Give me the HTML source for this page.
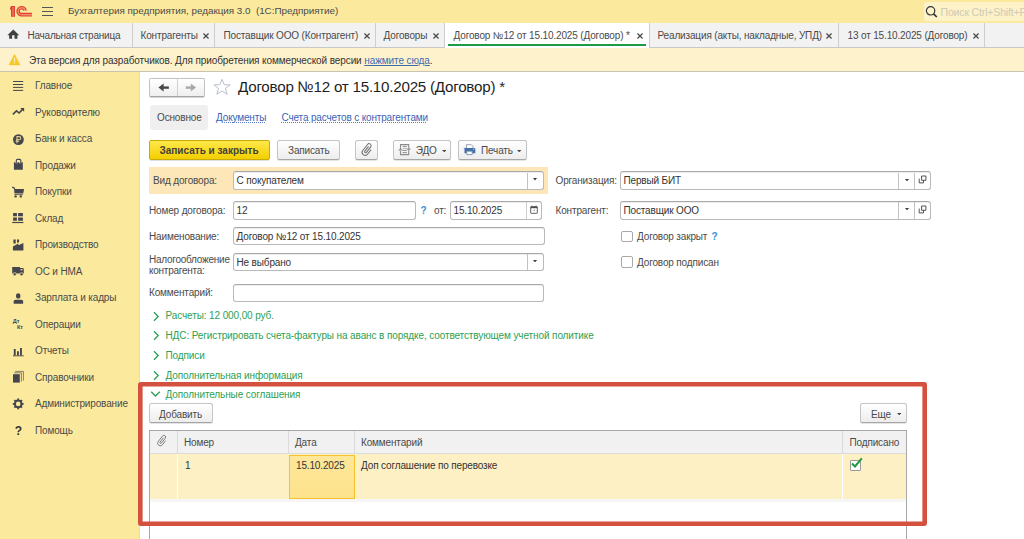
<!DOCTYPE html>
<html><head><meta charset="utf-8">
<style>
*{box-sizing:border-box;margin:0;padding:0}
html,body{width:1024px;height:539px;overflow:hidden;background:#fff;font-family:"Liberation Sans",sans-serif;font-size:10px;letter-spacing:-0.15px;color:#4d4d4d}
.a{position:absolute;white-space:nowrap;line-height:12px}
#top{position:absolute;left:0;top:0;width:1024px;height:23px;background:#fbea9e}
#tabs{position:absolute;left:0;top:23px;width:1024px;height:25px;background:#f2f2f2;border-bottom:1px solid #c8c8c8}
.sep{position:absolute;top:23px;width:1px;height:24px;background:#cdcdcd}
#warn{position:absolute;left:0;top:48px;width:1024px;height:24px;background:#fef2cc;border-bottom:1px solid #c9c4b0}
#side{position:absolute;left:0;top:72px;width:140px;height:467px;background:#fbea9e;border-right:1px solid #efdf98}
.x{position:absolute;font-size:12px;line-height:12px;color:#555}
.inp{position:absolute;background:#fff;border:1px solid #b9b9b9;border-top-color:#a9a9a9;border-radius:3px;box-shadow:inset 0 1px 0 rgba(0,0,0,.07)}
.btn{position:absolute;border:1px solid #c4c4c4;border-bottom-color:#a6a6a6;border-radius:2.5px;background:linear-gradient(#fff,#ededed);box-shadow:0 1px 0 rgba(0,0,0,.1)}
.grp{color:#2c9f55;letter-spacing:-0.11px}
.lbl{color:#4d4d4d}
.val{color:#333}
</style></head><body>

<!-- top bar -->
<div id="top"></div>
<svg class="a" style="left:6px;top:3px" width="30" height="17" viewBox="0 0 30 17">
 <path d="M5 3.1H9V13.7H5V6.8L4 6.6V5.3Z" fill="#e2402f"/>
 <path d="M7 4V13.5" stroke="#f29a7c" stroke-width="0.9"/>
 <path d="M18.9 7.6A3.45 3.45 0 1 0 15.5 11.65H26" fill="none" stroke="#ef8f74" stroke-width="1.4"/>
 <path d="M20.2 7.6A4.65 4.65 0 1 0 15.5 12.85H25.9" fill="none" stroke="#e2402f" stroke-width="1.3"/>
 <path d="M17.7 7.7A2.25 2.25 0 1 0 15.5 10.45H25.9" fill="none" stroke="#e2402f" stroke-width="1.2"/>
</svg>
<div class="a" style="left:42px;top:7px;width:11px;height:9px;border-top:1.5px solid #555;border-bottom:1.5px solid #555"><div style="position:absolute;left:0;top:2.5px;width:11px;height:1.5px;background:#555"></div></div>
<div class="a" style="left:68px;top:5px;font-size:9.9px;letter-spacing:-0.03px;color:#4a4a4a">Бухгалтерия предприятия, редакция 3.0 &nbsp;(1С:Предприятие)</div>
<div class="a" style="left:924px;top:2px;width:100px;height:19px;background:#fdf2c8;border-radius:3px 0 0 3px"></div>
<svg class="a" style="left:924px;top:4px" width="16" height="16" viewBox="0 0 16 16"><circle cx="6.6" cy="6.8" r="4.2" fill="none" stroke="#333" stroke-width="1.2"/><path d="M9.6 9.8L12.8 13" stroke="#333" stroke-width="1.7"/></svg>
<div class="a" style="left:940.5px;top:5.5px;color:#cfcab6;font-size:10.5px">Поиск Ctrl+Shift+F</div>

<!-- tabs -->
<div id="tabs"></div>
<svg class="a" style="left:4px;top:25px" width="20" height="20" viewBox="0 0 20 20"><path d="M3.4 10.2L9.3 4.4L15.2 10.2Z" fill="#404040"/><path d="M5.2 9.6H8.1V13.7H5.2ZM10.5 9.6H13.4V13.7H10.5Z" fill="#404040"/></svg>
<div class="a" style="left:27.5px;top:30px;letter-spacing:-0.22px;color:#4a4a4a">Начальная страница</div>
<div class="sep" style="left:132px"></div>
<div class="a" style="left:140.5px;top:30px;color:#4a4a4a">Контрагенты</div>
<svg class="a" style="left:202.9px;top:32.6px" width="6" height="6" viewBox="0 0 6 6"><path d="M0.4 0.5L5.6 5.5M5.6 0.5L0.4 5.5" stroke="#4a4a4a" stroke-width="1.35"/></svg>
<div class="sep" style="left:214px"></div>
<div class="a" style="left:223.5px;top:30px;color:#4a4a4a">Поставщик ООО (Контрагент)</div>
<svg class="a" style="left:363.9px;top:32.6px" width="6" height="6" viewBox="0 0 6 6"><path d="M0.4 0.5L5.6 5.5M5.6 0.5L0.4 5.5" stroke="#4a4a4a" stroke-width="1.35"/></svg>
<div class="sep" style="left:375px"></div>
<div class="a" style="left:383.5px;top:30px;color:#4a4a4a">Договоры</div>
<svg class="a" style="left:433px;top:32.6px" width="6" height="6" viewBox="0 0 6 6"><path d="M0.4 0.5L5.6 5.5M5.6 0.5L0.4 5.5" stroke="#4a4a4a" stroke-width="1.35"/></svg>
<div class="sep" style="left:444px"></div>
<div class="a" style="left:445px;top:23px;width:204px;height:25px;background:#fff"></div>
<div class="a" style="left:447.5px;top:44px;width:198px;height:1.8px;background:#1f9a45"></div>
<div class="a" style="left:453.5px;top:30px;color:#4a4a4a">Договор №12 от 15.10.2025 (Договор) *</div>
<svg class="a" style="left:636.9px;top:32.6px" width="6" height="6" viewBox="0 0 6 6"><path d="M0.4 0.5L5.6 5.5M5.6 0.5L0.4 5.5" stroke="#4a4a4a" stroke-width="1.35"/></svg>
<div class="sep" style="left:649px"></div>
<div class="a" style="left:657.5px;top:30px;color:#4a4a4a">Реализация (акты, накладные, УПД)</div>
<svg class="a" style="left:826.2px;top:32.6px" width="6" height="6" viewBox="0 0 6 6"><path d="M0.4 0.5L5.6 5.5M5.6 0.5L0.4 5.5" stroke="#4a4a4a" stroke-width="1.35"/></svg>
<div class="sep" style="left:838px"></div>
<div class="a" style="left:847.5px;top:30px;color:#4a4a4a">13 от 15.10.2025 (Договор)</div>
<svg class="a" style="left:972.6px;top:32.6px" width="6" height="6" viewBox="0 0 6 6"><path d="M0.4 0.5L5.6 5.5M5.6 0.5L0.4 5.5" stroke="#4a4a4a" stroke-width="1.35"/></svg>
<div class="sep" style="left:984px"></div>

<!-- warning -->
<div id="warn"></div>
<svg class="a" style="left:4px;top:50px" width="20" height="20" viewBox="0 0 20 20"><path d="M4.9 14.9L10.5 4.3L16.1 14.9Z" fill="#f7c829" stroke="#f7c829" stroke-width=".5" stroke-linejoin="round"/><path d="M9.9 7.8H11.1V11.8H9.9ZM9.9 12.4H11.1V13.6H9.9Z" fill="#fdf2c6"/></svg>
<div class="a" style="left:29px;top:55px;letter-spacing:-0.1px;color:#333">Эта версия для разработчиков. Для приобретения коммерческой версии <span style="color:#3b6db3;text-decoration:underline">нажмите сюда</span>.</div>

<!-- sidebar -->
<div id="side"></div>
<svg class="a" style="left:8px;top:76.00px" width="20" height="20" viewBox="0 0 20 20"><g stroke="#45454d" stroke-width="1"><path d="M5 5.5H15.2M5 8.5H15.2M5 11.4H15.2M5 14.4H15.2"/></g></svg>
<div class="a" style="left:35px;top:80.20px;color:#4a4a4a">Главное</div>
<svg class="a" style="left:8px;top:102.49px" width="20" height="20" viewBox="0 0 20 20"><path d="M4.8 12.3L8.5 8.8L11.1 11L14.6 7.4" fill="none" stroke="#45454d" stroke-width="1.6"/><path d="M12.2 5.9H16.1V9.8Z" fill="#45454d"/></svg>
<div class="a" style="left:35px;top:106.69px;color:#4a4a4a">Руководителю</div>
<svg class="a" style="left:8px;top:128.98px" width="20" height="20" viewBox="0 0 20 20"><circle cx="10.4" cy="10.6" r="5.4" fill="#45454d"/><path d="M9 14.2V7.6H11.2A1.6 1.6 0 0 1 11.2 10.8H8M7.6 12.3H11" fill="none" stroke="#fbea9e" stroke-width="1.1" opacity=".85"/></svg>
<div class="a" style="left:35px;top:133.18px;color:#4a4a4a">Банк и касса</div>
<svg class="a" style="left:8px;top:155.47px" width="20" height="20" viewBox="0 0 20 20"><path d="M5.9 7.3H7.4V8.2H9.6V7.3H11.3V8.2H13.4V7.3H14.8V14.8H5.9Z" fill="#45454d"/><path d="M8.3 8.5V5.6Q8.3 4.4 9.5 4.4H11.6Q12.8 4.4 12.8 5.6V8.5" fill="none" stroke="#45454d" stroke-width="1.1"/></svg>
<div class="a" style="left:35px;top:159.67px;color:#4a4a4a">Продажи</div>
<svg class="a" style="left:8px;top:181.96px" width="20" height="20" viewBox="0 0 20 20"><path d="M4.2 5.2L6 5.8L6.6 7" fill="none" stroke="#45454d" stroke-width="1.3"/><path d="M6 7H16.1L15.2 11.6H6.5Z" fill="#45454d"/><path d="M6.4 12.6H15" stroke="#45454d" stroke-width="0.8"/><circle cx="7.6" cy="14.4" r="1.2" fill="#45454d"/><circle cx="12.8" cy="14.4" r="1.2" fill="#45454d"/></svg>
<div class="a" style="left:35px;top:186.16px;color:#4a4a4a">Покупки</div>
<svg class="a" style="left:8px;top:208.45px" width="20" height="20" viewBox="0 0 20 20"><path d="M5.1 5H8.9V8.2H5.1ZM10.1 5H14.9V8.2H10.1ZM5.1 9.4H8.9V12.8H5.1ZM10.1 9.4H14.9V12.8H10.1Z" fill="#45454d"/><path d="M4.2 14.5H15.4" stroke="#45454d" stroke-width="1.2"/></svg>
<div class="a" style="left:35px;top:212.65px;color:#4a4a4a">Склад</div>
<svg class="a" style="left:8px;top:234.94px" width="20" height="20" viewBox="0 0 20 20"><path d="M5.4 4.6H7.7V8.6H5.4ZM9 4.6H11.1V6.8L10 7.8H9Z" fill="#45454d"/><path d="M4.9 11.5L10.4 8.4V10.2L15.4 8.1V15.6H4.9Z" fill="#45454d"/></svg>
<div class="a" style="left:35px;top:239.14px;color:#4a4a4a">Производство</div>
<svg class="a" style="left:8px;top:261.43px" width="20" height="20" viewBox="0 0 20 20"><path d="M4.2 5.9H12V12.6H4.2ZM12 7H15.3L15.8 8.3V12.6H12Z" fill="#45454d"/><path d="M12.5 8H14.6V9.4H12.5Z" fill="#fbea9e" opacity=".8"/><circle cx="6.7" cy="13.2" r="1.6" fill="#45454d" stroke="#fbea9e" stroke-width=".7"/><circle cx="13.5" cy="13.2" r="1.6" fill="#45454d" stroke="#fbea9e" stroke-width=".7"/></svg>
<div class="a" style="left:35px;top:265.63px;color:#4a4a4a">ОС и НМА</div>
<svg class="a" style="left:8px;top:287.92px" width="20" height="20" viewBox="0 0 20 20"><ellipse cx="10.2" cy="7.9" rx="2.2" ry="2.7" fill="#45454d"/><path d="M5.7 15.8V13.3Q5.7 11.7 7.5 11.7H13.3Q15.1 11.7 15.1 13.3V15.8Z" fill="#45454d"/></svg>
<div class="a" style="left:35px;top:292.12px;color:#4a4a4a">Зарплата и кадры</div>
<svg class="a" style="left:8px;top:314.41px" width="20" height="20" viewBox="0 0 20 20"><text x="4.8" y="9.4" font-family="Liberation Sans" font-size="5.6" font-weight="bold" fill="#45454d">Дт</text><text x="8.9" y="14.6" font-family="Liberation Sans" font-size="5.6" font-weight="bold" fill="#45454d">Кт</text></svg>
<div class="a" style="left:35px;top:318.61px;color:#4a4a4a">Операции</div>
<svg class="a" style="left:8px;top:340.90px" width="20" height="20" viewBox="0 0 20 20"><path d="M5.8 8.1H7.7V14.5H5.8ZM9 10.2H10.9V14.5H9ZM12 7H13.9V14.5H12Z" fill="#45454d"/><path d="M5 14.8H15.8" stroke="#45454d" stroke-width=".9"/></svg>
<div class="a" style="left:35px;top:345.10px;color:#4a4a4a">Отчеты</div>
<svg class="a" style="left:8px;top:367.39px" width="20" height="20" viewBox="0 0 20 20"><path d="M5 7.2H11.8V15.6H5Z" fill="#45454d"/><path d="M6.2 5.8H13.4V14.6M7.2 4.4H15.4V13.6" fill="none" stroke="#45454d" stroke-width=".8" opacity=".8"/></svg>
<div class="a" style="left:35px;top:371.59px;color:#4a4a4a">Справочники</div>
<svg class="a" style="left:8px;top:393.88px" width="20" height="20" viewBox="0 0 20 20"><g transform="translate(10.2 9.9)"><circle r="3.3" fill="none" stroke="#45454d" stroke-width="2"/><rect x="-0.9" y="-5.4" width="1.8" height="2.6" fill="#45454d" transform="rotate(0)"/><rect x="-0.9" y="-5.4" width="1.8" height="2.6" fill="#45454d" transform="rotate(45)"/><rect x="-0.9" y="-5.4" width="1.8" height="2.6" fill="#45454d" transform="rotate(90)"/><rect x="-0.9" y="-5.4" width="1.8" height="2.6" fill="#45454d" transform="rotate(135)"/><rect x="-0.9" y="-5.4" width="1.8" height="2.6" fill="#45454d" transform="rotate(180)"/><rect x="-0.9" y="-5.4" width="1.8" height="2.6" fill="#45454d" transform="rotate(225)"/><rect x="-0.9" y="-5.4" width="1.8" height="2.6" fill="#45454d" transform="rotate(270)"/><rect x="-0.9" y="-5.4" width="1.8" height="2.6" fill="#45454d" transform="rotate(315)"/></g></svg>
<div class="a" style="left:35px;top:398.08px;color:#4a4a4a">Администрирование</div>
<svg class="a" style="left:8px;top:420.37px" width="20" height="20" viewBox="0 0 20 20"><text x="10.3" y="14.5" text-anchor="middle" font-family="Liberation Sans" font-size="12" font-weight="bold" fill="#333">?</text></svg>
<div class="a" style="left:35px;top:424.57px;color:#4a4a4a">Помощь</div>

<!-- form header -->
<div class="a" style="left:149px;top:78px;width:56px;height:18.5px;border:1px solid #c2c2c2;border-bottom-color:#a5a5a5;border-radius:2px;background:linear-gradient(#fff,#efefef);box-shadow:0 1px 0 rgba(0,0,0,.16)"></div>
<div class="a" style="left:177px;top:79px;width:1px;height:17px;background:#d0d0d0"></div>
<svg class="a" style="left:157px;top:83px" width="14" height="10" viewBox="0 0 14 10"><path d="M1.4 4.6L6.6 0.6V8.6Z" fill="#484848"/><path d="M5.5 3.4H11.9V5.8H5.5Z" fill="#484848"/></svg>
<svg class="a" style="left:184px;top:83px" width="14" height="10" viewBox="0 0 14 10"><path d="M12 4.6L6.8 0.6V8.6Z" fill="#a8a8a8"/><path d="M1.8 3.4H8V5.8H1.8Z" fill="#a8a8a8"/></svg>
<svg class="a" style="left:212.3px;top:77.9px" width="20" height="18" viewBox="0 0 19 17"><path d="M9.5 1.2L11.6 6.3L17.2 6.5L12.8 9.9L14.4 15.4L9.5 12.3L4.6 15.4L6.2 9.9L1.8 6.5L7.4 6.3Z" fill="#fff" stroke="#b3bcc6" stroke-width=".9"/></svg>
<div class="a" style="left:238px;top:78.3px;font-size:15.2px;letter-spacing:-0.25px;line-height:17px;color:#1f1f1f">Договор №12 от 15.10.2025 (Договор) *</div>

<div class="a" style="left:150px;top:104.5px;width:58px;height:25px;background:#efefef;border-radius:3px"></div>
<div class="a" style="left:157px;top:111.7px;color:#4a4a4a">Основное</div>
<div class="a" style="left:216px;top:112.2px;color:#3a63b8;text-decoration:underline dotted #5b7fc8;text-underline-offset:1.2px">Документы</div>
<div class="a" style="left:281.5px;top:112.2px;color:#3a63b8;text-decoration:underline dotted #5b7fc8;text-underline-offset:1.2px">Счета расчетов с контрагентами</div>

<!-- command bar -->
<div class="a" style="left:149px;top:140px;width:121px;height:19.5px;border:1px solid #c9ab08;border-radius:2px;background:linear-gradient(#ffe84a,#f3cf00);box-shadow:0 1px 0 rgba(0,0,0,.12)"></div>
<div class="a" style="left:159.5px;top:145px;font-size:10px;font-weight:bold;letter-spacing:0;color:#44423a">Записать и закрыть</div>
<div class="btn" style="left:277px;top:140px;width:63px;height:19.5px"></div>
<div class="a" style="left:288px;top:145px;color:#4a4a4a">Записать</div>
<div class="btn" style="left:355px;top:140px;width:23px;height:19.5px"></div>
<svg class="a" style="left:356px;top:140.5px" width="22" height="18" viewBox="0 0 22 18"><path transform="rotate(38 11 9)" d="M10 5.2V11.2A1 1 0 0 0 12 11.2V4.3A2 2 0 0 0 8 4.3V12A3 3 0 0 0 14 12V6.2" fill="none" stroke="#6e6e6e" stroke-width="1"/></svg>
<div class="btn" style="left:393px;top:140px;width:58px;height:19.5px"></div>
<svg class="a" style="left:394px;top:142px" width="20" height="16" viewBox="0 0 20 16"><path d="M6.5 7V2.6H14.7V6.5M14.7 9V12.6H6.5V9" fill="none" stroke="#8c8c8c" stroke-width="1.1"/><path d="M4.2 8.6H8.8L6.5 6Z M12.4 6.4H17L14.7 9Z" fill="#8c8c8c"/><path d="M8.6 4.4H12.8M8.6 8.4H12.8M8.6 10.6H12.8" stroke="#8c8c8c" stroke-width="1"/><path d="M8.6 6.4H12.8" stroke="#b5b5b5" stroke-width="1"/></svg>
<div class="a" style="left:415.8px;top:145px;color:#4a4a4a">ЭДО</div>
<svg class="a" style="left:441.5px;top:149.5px" width="4.5" height="2.3" viewBox="0 0 4.5 2.3"><path d="M0 0H4.5L2.25 2.3Z" fill="#4a4a4a"/></svg>
<div class="btn" style="left:458px;top:140px;width:69px;height:19.5px"></div>
<svg class="a" style="left:459px;top:142px" width="20" height="16" viewBox="0 0 20 16"><path d="M7.4 6.2V2.7H12.3L13.9 4.3V6.2" fill="#fff" stroke="#8e9aa8" stroke-width=".9"/><path d="M5.6 6.1H15.6Q16.3 6.1 16.3 6.8V11.3H5.5V6.8Q5.5 6.1 5.6 6.1Z" fill="#3f6ea8"/><path d="M4.9 6.4Q4.9 6 5.4 6" stroke="#3f6ea8"/><path d="M7.8 9.2H13.2V12.6H7.8Z" fill="#fff" stroke="#7f93ad" stroke-width=".9"/><path d="M13.8 7.2H15.3" stroke="#dfe8f2" stroke-width=".8"/></svg>
<div class="a" style="left:481px;top:145px;color:#4a4a4a">Печать</div>
<svg class="a" style="left:517.2px;top:149.5px" width="4.5" height="2.3" viewBox="0 0 4.5 2.3"><path d="M0 0H4.5L2.25 2.3Z" fill="#4a4a4a"/></svg>

<!-- row 1 -->
<div class="a" style="left:149px;top:167px;width:399px;height:26.5px;background:#fde6b8"></div>
<div class="a" style="left:153px;top:174.7px;color:#4a4a4a">Вид договора:</div>
<div class="inp" style="left:233px;top:171px;width:311px;height:18.5px"></div>
<div class="a" style="left:527px;top:172.5px;width:1px;height:16.5px;background:#c2c2c2"></div>
<svg class="a" style="left:533px;top:178.3px" width="4" height="2.4" viewBox="0 0 4 2.4"><path d="M0 0H4L2 2.4Z" fill="#3a3a3a"/></svg>
<div class="a" style="left:236.5px;top:174.7px;color:#333">С покупателем</div>

<div class="a" style="left:555.5px;top:174.5px;color:#4a4a4a">Организация:</div>
<div class="inp" style="left:620px;top:171px;width:311px;height:18.5px"></div>
<div class="a" style="left:898px;top:172.5px;width:1px;height:16px;background:#c2c2c2"></div>
<div class="a" style="left:914px;top:172.5px;width:1px;height:16px;background:#c2c2c2"></div>
<svg class="a" style="left:904.5px;top:178.5px" width="4" height="2.4" viewBox="0 0 4 2.4"><path d="M0 0H4L2 2.4Z" fill="#3a3a3a"/></svg>
<svg class="a" style="left:918px;top:175px" width="9" height="9" viewBox="0 0 9 9"><path d="M3.6 1H7.9V5.3H3.6Z" fill="none" stroke="#4a4a4a" stroke-width=".95"/><path d="M1.2 3.6V7.9H5.5V5.3" fill="none" stroke="#4a4a4a" stroke-width=".95"/></svg>
<div class="a" style="left:623.5px;top:174.5px;color:#333">Первый БИТ</div>

<!-- row 2 -->
<div class="a" style="left:149px;top:205px;color:#4a4a4a">Номер договора:</div>
<div class="inp" style="left:233px;top:200.5px;width:183px;height:19px"></div>
<div class="a" style="left:236.5px;top:205px;color:#333">12</div>
<div class="a" style="left:420.5px;top:205px;color:#3a8fd0;font-weight:bold">?</div>
<div class="a" style="left:434px;top:205px;color:#4a4a4a">от:</div>
<div class="inp" style="left:450px;top:200.5px;width:92px;height:19px"></div>
<div class="a" style="left:526px;top:201.5px;width:1px;height:17px;background:#cfcfcf"></div>
<svg class="a" style="left:529.5px;top:204.5px" width="8" height="9" viewBox="0 0 8 9"><path d="M1.2 1.6H6.8Q7.3 1.6 7.3 2.1V7.8Q7.3 8.3 6.8 8.3H1.2Q0.7 8.3 0.7 7.8V2.1Q0.7 1.6 1.2 1.6Z" fill="none" stroke="#505050" stroke-width=".9"/><path d="M0.7 1.6H7.3V3.2H0.7Z" fill="#505050"/><path d="M2 0.6V2M6 0.6V2" stroke="#666" stroke-width=".9"/><path d="M3.6 4.8H4.8V6H3.6Z" fill="#888"/></svg>
<div class="a" style="left:453.5px;top:205px;color:#333">15.10.2025</div>

<div class="a" style="left:555.5px;top:205.3px;color:#4a4a4a">Контрагент:</div>
<div class="inp" style="left:620px;top:200.5px;width:311px;height:19px"></div>
<div class="a" style="left:898px;top:201.5px;width:1px;height:17px;background:#c2c2c2"></div>
<div class="a" style="left:914px;top:201.5px;width:1px;height:17px;background:#c2c2c2"></div>
<svg class="a" style="left:904.5px;top:208px" width="4" height="2.4" viewBox="0 0 4 2.4"><path d="M0 0H4L2 2.4Z" fill="#3a3a3a"/></svg>
<svg class="a" style="left:918px;top:204.5px" width="9" height="9" viewBox="0 0 9 9"><path d="M3.6 1H7.9V5.3H3.6Z" fill="none" stroke="#4a4a4a" stroke-width=".95"/><path d="M1.2 3.6V7.9H5.5V5.3" fill="none" stroke="#4a4a4a" stroke-width=".95"/></svg>
<div class="a" style="left:623.5px;top:205.3px;color:#333">Поставщик ООО</div>

<!-- row 3 -->
<div class="a" style="left:149px;top:231px;color:#4a4a4a">Наименование:</div>
<div class="inp" style="left:233px;top:226.5px;width:312px;height:18.5px"></div>
<div class="a" style="left:236.5px;top:231px;color:#333">Договор №12 от 15.10.2025</div>
<div class="a" style="left:621px;top:230.5px;width:12px;height:11.5px;border:1px solid #a9a9a9;border-radius:2px;background:#fff"></div>
<div class="a" style="left:637px;top:230.5px;color:#4a4a4a">Договор закрыт</div>
<div class="a" style="left:711.5px;top:230.5px;color:#3a8fd0;font-weight:bold">?</div>

<!-- row 4 -->
<div class="a" style="left:149px;top:254px;color:#4a4a4a;line-height:11px;letter-spacing:-0.25px">Налогообложение<br>контрагента:</div>
<div class="inp" style="left:233px;top:252.5px;width:311px;height:18.5px"></div>
<div class="a" style="left:527px;top:253.5px;width:1px;height:16.5px;background:#c2c2c2"></div>
<svg class="a" style="left:533px;top:259.8px" width="4" height="2.4" viewBox="0 0 4 2.4"><path d="M0 0H4L2 2.4Z" fill="#3a3a3a"/></svg>
<div class="a" style="left:236.5px;top:256.7px;color:#333">Не выбрано</div>
<div class="a" style="left:621px;top:256px;width:12px;height:11.5px;border:1px solid #a9a9a9;border-radius:2px;background:#fff"></div>
<div class="a" style="left:637px;top:256.5px;color:#4a4a4a">Договор подписан</div>

<!-- row 5 -->
<div class="a" style="left:149px;top:286.5px;color:#4a4a4a">Комментарий:</div>
<div class="inp" style="left:233px;top:283.5px;width:311px;height:18px"></div>

<!-- groups -->
<svg class="a" style="left:151px;top:311px" width="10" height="11" viewBox="0 0 10 11"><path d="M3 1.2L7.2 5.5L3 9.8" fill="none" stroke="#2c9f55" stroke-width="1.3"/></svg>
<div class="a grp" style="left:165.5px;top:309.6px">Расчеты: 12 000,00 руб.</div>
<svg class="a" style="left:151px;top:330.4px" width="10" height="11" viewBox="0 0 10 11"><path d="M3 1.2L7.2 5.5L3 9.8" fill="none" stroke="#2c9f55" stroke-width="1.3"/></svg>
<div class="a grp" style="left:165.5px;top:330px">НДС: Регистрировать счета-фактуры на аванс в порядке, соответствующем учетной политике</div>
<svg class="a" style="left:151px;top:350px" width="10" height="11" viewBox="0 0 10 11"><path d="M3 1.2L7.2 5.5L3 9.8" fill="none" stroke="#2c9f55" stroke-width="1.3"/></svg>
<div class="a grp" style="left:165.5px;top:349.6px">Подписи</div>
<svg class="a" style="left:151px;top:370px" width="10" height="11" viewBox="0 0 10 11"><path d="M3 1.2L7.2 5.5L3 9.8" fill="none" stroke="#2c9f55" stroke-width="1.3"/></svg>
<div class="a grp" style="left:165.5px;top:369.6px">Дополнительная информация</div>
<svg class="a" style="left:150px;top:389.2px" width="11" height="10" viewBox="0 0 11 10"><path d="M1.2 2.8L5.5 7L9.8 2.8" fill="none" stroke="#2c9f55" stroke-width="1.3"/></svg>
<div class="a grp" style="left:165.5px;top:388.8px">Дополнительные соглашения</div>

<!-- table section -->
<div class="btn" style="left:149px;top:403px;width:64px;height:19.5px"></div>
<div class="a" style="left:159px;top:408.5px;color:#4a4a4a">Добавить</div>
<div class="btn" style="left:860px;top:403px;width:47px;height:19.5px"></div>
<div class="a" style="left:871px;top:408.5px;color:#4a4a4a">Еще</div>
<svg class="a" style="left:896.8px;top:413px" width="4.5" height="2.3" viewBox="0 0 4.5 2.3"><path d="M0 0H4.5L2.25 2.3Z" fill="#4a4a4a"/></svg>

<div class="a" style="left:149px;top:430px;width:758px;height:120px;border:1px solid #a8a8a8;background:#fff"></div>
<div class="a" style="left:150px;top:431px;width:756px;height:22.5px;background:#f1f1f1;border-bottom:1px solid #dcdcdc"></div>
<div class="a" style="left:177px;top:431px;width:1px;height:22.5px;background:#dadada"></div>
<div class="a" style="left:288px;top:431px;width:1px;height:22.5px;background:#dadada"></div>
<div class="a" style="left:354px;top:431px;width:1px;height:22.5px;background:#dadada"></div>
<div class="a" style="left:842px;top:431px;width:1px;height:22.5px;background:#dadada"></div>
<svg class="a" style="left:152px;top:432.5px" width="20" height="16" viewBox="0 0 22 18"><path transform="rotate(38 11 9)" d="M10 5.2V11.2A1 1 0 0 0 12 11.2V4.3A2 2 0 0 0 8 4.3V12A3 3 0 0 0 14 12V6.2" fill="none" stroke="#7a7a7a" stroke-width="1"/></svg>
<div class="a" style="left:184px;top:436.6px;color:#4a4a4a">Номер</div>
<div class="a" style="left:295px;top:436.6px;color:#4a4a4a">Дата</div>
<div class="a" style="left:361px;top:436.6px;color:#4a4a4a">Комментарий</div>
<div class="a" style="left:849.5px;top:436.6px;color:#4a4a4a">Подписано</div>

<div class="a" style="left:150px;top:454px;width:756px;height:45px;background:#fdf0c4"></div>
<div class="a" style="left:150px;top:499px;width:756px;height:3px;background:#f6f6f6"></div>
<div class="a" style="left:177px;top:454px;width:1px;height:45px;background:#fff"></div>
<div class="a" style="left:842px;top:454px;width:1px;height:45px;background:#fff"></div>
<div class="a" style="left:289px;top:454.6px;width:65.5px;height:44.2px;border:1.6px solid #f5c22e;background:linear-gradient(#fde79a,#fde28c)"></div>
<div class="a" style="left:185px;top:460px;color:#333">1</div>
<div class="a" style="left:296px;top:460px;color:#333">15.10.2025</div>
<div class="a" style="left:361px;top:460px;color:#333">Доп соглашение по перевозке</div>
<div class="a" style="left:850px;top:460px;width:11px;height:10.5px;border:1px solid #9a9a9a;border-radius:1px;background:#fff"></div>
<svg class="a" style="left:850px;top:456px" width="14" height="13" viewBox="0 0 14 13"><path d="M2 7.5L5 10.5L11.8 2.3" fill="none" stroke="#1f9a3c" stroke-width="2"/></svg>

<!-- red box -->
<svg class="a" style="left:138px;top:382px" width="789" height="144" viewBox="0 0 789 144"><rect x="2.3" y="2.3" width="784.4" height="139.4" rx="0.6" fill="none" stroke="#d4503f" stroke-width="4.6"/></svg>

</body></html>
